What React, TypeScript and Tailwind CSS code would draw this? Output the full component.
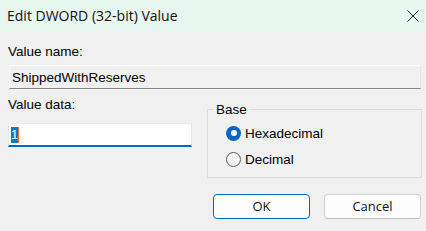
import React from "react";

const sans = { fontFamily: '"Liberation Sans", Arial, sans-serif' };

function Radio({ checked, label }: { checked: boolean; label: string }) {
  return (
    <div className="flex h-[20px] items-center gap-[4px]">
      {checked ? (
        <span className="flex h-[15px] w-[15px] items-center justify-center rounded-full bg-[#0067c0]">
          <span className="h-[6px] w-[6px] rounded-full bg-white" />
        </span>
      ) : (
        <span className="h-[15px] w-[15px] rounded-full border border-[#5c5c5c] bg-[#f5f5f5]" />
      )}
      <span className="text-[13.5px] font-normal leading-[15px] text-black">{label}</span>
    </div>
  );
}

export default function App() {
  return (
    <div
      className="relative h-[231px] w-[426px] overflow-hidden bg-[#f0f0f0] text-[13.5px] font-normal leading-[15px] text-black"
      style={sans}
    >
      {/* Title bar */}
      <div className="flex h-[31px] items-center justify-between bg-[#e7f6ee] pl-[7px] pr-[7px]">
        <span
          className="text-[14px] text-[#111]"
          style={{ fontFamily: '"Open Sans", "Noto Sans", sans-serif' }}
        >
          Edit DWORD (32-bit) Value
        </span>
        <svg width="12" height="12" viewBox="0 0 12 12">
          <path d="M0.5 0.5 L11.5 11.5 M11.5 0.5 L0.5 11.5" stroke="#1b1b1b" strokeWidth="1" />
        </svg>
      </div>

      {/* Body */}
      <div className="flex flex-col pl-[8px] pr-[4px]">
        <div className="mt-[13px]">Value name:</div>
        <div className="ml-[1px] mt-[6px] flex h-[24px] w-[412px] items-center border border-b-[#868686] border-l-[#f7f7f7] border-r-[#e6e6e6] border-t-[#fbfbfb] bg-[#f0f0f0] pl-[2px]">
          ShippedWithReserves
        </div>

        <div className="mt-[8px] flex gap-[15px]">
          <div className="flex w-[184px] flex-col">
            <div>Value data:</div>
            <div className="mt-[11px] flex h-[24px] items-center border-x border-t border-b-2 border-x-[#e6e6e6] border-b-[#0067c0] border-t-[#ececec] bg-white pl-[2px]">
              <span className="flex h-[16px] w-[7px] items-center justify-center bg-[#0078d7] text-white">
                1
              </span>
              <span className="h-[16px] w-[1px] bg-[#f26b1d]" />
            </div>
          </div>

          <fieldset className="mt-[5px] h-[76px] w-[215px] border border-[#dcdcdc] px-0 pb-[9px]">
            <legend className="ml-[6px] px-[2px] font-normal leading-[15px]">Base</legend>
            <div className="mt-[6px] flex flex-col gap-[6px] pl-[18px]">
              <Radio checked label="Hexadecimal" />
              <Radio checked={false} label="Decimal" />
            </div>
          </fieldset>
        </div>

        <div
          className="mt-[16px] flex justify-end gap-[14px] pr-[1px]"
          style={{ fontFamily: '"Open Sans", "Noto Sans", sans-serif' }}
        >
          <button className="flex h-[25px] w-[97px] items-center justify-center rounded-[4px] border border-[#0067c0] bg-[#fdfdfd] text-[13px] text-[#111]">
            OK
          </button>
          <button className="flex h-[25px] w-[97px] items-center justify-center rounded-[4px] border border-[#d0d0d0] border-b-[#bdbdbd] bg-[#fdfdfd] text-[13px] text-[#111]">
            Cancel
          </button>
        </div>
      </div>
    </div>
  );
}
